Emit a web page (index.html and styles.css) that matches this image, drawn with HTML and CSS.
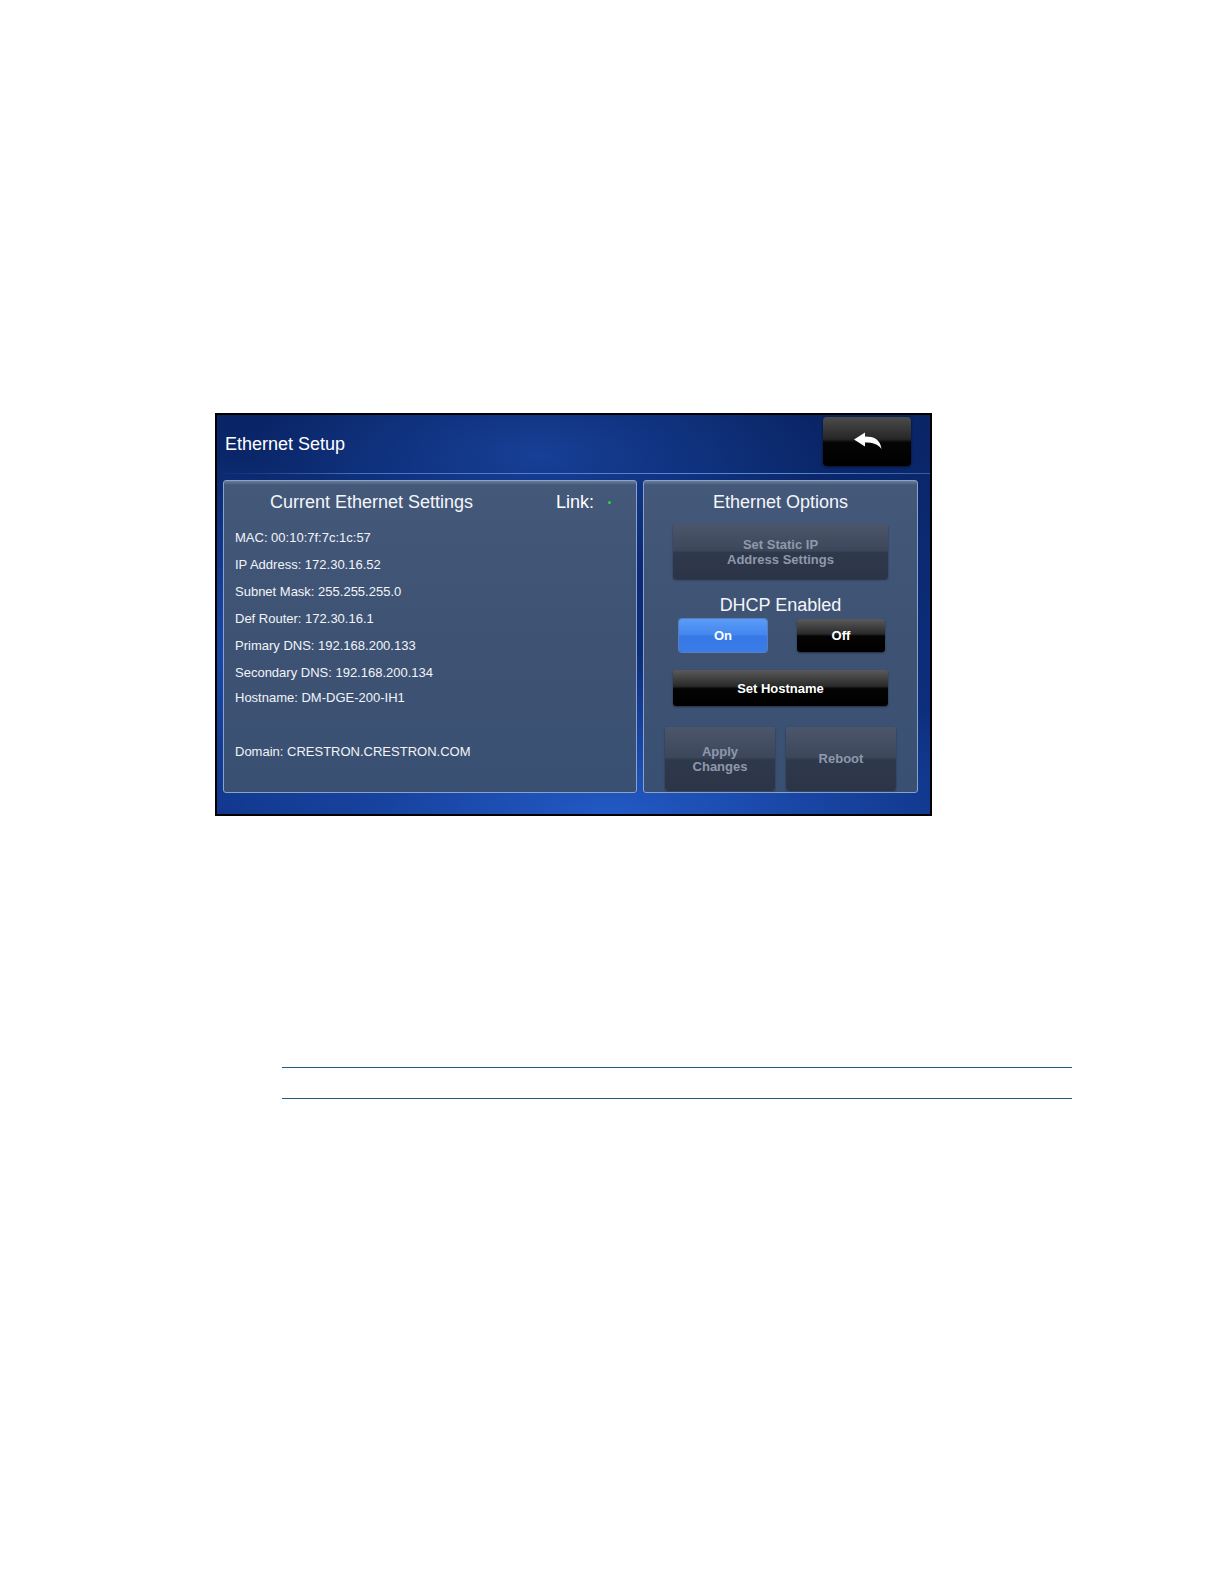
FILE: index.html
```html
<!DOCTYPE html>
<html lang="en">
<head>
    <meta charset="UTF-8">
    <meta name="viewport" content="width=device-width, initial-scale=1.0">
    <title>Ethernet Setup</title>
    <link rel="stylesheet" href="styles.css">
</head>
<body>
    <div class="page">
        <div class="screen">
            <div class="header">
                <div class="header-title">Ethernet Setup</div>
                <button class="back-btn" type="button" aria-label="Back">
                    <svg width="30" height="18" viewBox="0 0 30 18">
                        <path d="M1 7.5 L12 0.5 L12 4.5 C21 4.5 27 7 28.5 17 C25 12 20 10.5 12 10.5 L12 14.5 Z" fill="#ffffff"/>
                    </svg>
                </button>
            </div>
            <div class="divider"></div>
            <div class="panels">
                <div class="panel settings-panel">
                    <div class="settings-head">
                        <span class="panel-title">Current Ethernet Settings</span>
                        <span class="link">Link:<span class="link-dot"></span></span>
                    </div>
                    <ul class="info">
                        <li>MAC: 00:10:7f:7c:1c:57</li>
                        <li>IP Address: 172.30.16.52</li>
                        <li>Subnet Mask: 255.255.255.0</li>
                        <li>Def Router: 172.30.16.1</li>
                        <li>Primary DNS: 192.168.200.133</li>
                        <li>Secondary DNS: 192.168.200.134</li>
                        <li class="host">Hostname: DM-DGE-200-IH1</li>
                        <li class="domain">Domain: CRESTRON.CRESTRON.COM</li>
                    </ul>
                </div>
                <div class="panel options-panel">
                    <div class="panel-title">Ethernet Options</div>
                    <button class="btn btn-off btn-static" type="button">Set Static IP<br>Address Settings</button>
                    <div class="dhcp-title">DHCP Enabled</div>
                    <div class="dhcp-row">
                        <button class="btn btn-blue btn-toggle" type="button">On</button>
                        <button class="btn btn-black btn-toggle" type="button">Off</button>
                    </div>
                    <button class="btn btn-black btn-hostname" type="button">Set Hostname</button>
                    <div class="action-row">
                        <button class="btn btn-off btn-action" type="button">Apply<br>Changes</button>
                        <button class="btn btn-off btn-action" type="button">Reboot</button>
                    </div>
                </div>
            </div>
        </div>
        <div class="rules"></div>
    </div>
</body>
</html>
```

FILE: styles.css
```css
body {
    margin: 0;
    padding: 0;
    background-color: #ffffff;
    font-family: "Liberation Sans", Arial, sans-serif;
}
.page {
    padding-top: 413px;
}
.screen {
    box-sizing: border-box;
    width: 717px;
    height: 403px;
    margin-left: 215px;
    border: 2px solid #000000;
    background:
        radial-gradient(ellipse 60% 40% at 55% 100%, rgba(40, 100, 215, 0.8), rgba(40, 100, 215, 0) 100%),
        radial-gradient(ellipse 40% 30% at 45% 10%, rgba(30, 80, 180, 0.6), rgba(30, 80, 180, 0) 100%),
        radial-gradient(ellipse 30% 50% at 0% 60%, rgba(35, 90, 200, 0.6), rgba(35, 90, 200, 0) 100%),
        linear-gradient(#0a2566, #0c2d7a 60%, #0d2f7e);
    color: #ffffff;
}
.header {
    display: flex;
    justify-content: space-between;
    align-items: flex-start;
    height: 58px;
}
.header-title {
    font-size: 18px;
    line-height: 22px;
    margin: 18px 0 0 8px;
}
.back-btn {
    width: 88px;
    height: 49px;
    margin: 2px 19px 0 0;
    border: none;
    border-radius: 4px;
    background: linear-gradient(#4c4c4c, #262626 45%, #050505 52%, #000000);
    box-shadow: 0 1px 3px rgba(0, 0, 0, 0.6);
    display: flex;
    justify-content: center;
    align-items: center;
    padding: 0 0 2px 2px;
}
.divider {
    height: 1px;
    background: linear-gradient(90deg, rgba(90, 140, 230, 0), rgba(90, 140, 230, 0.7) 20%, rgba(110, 160, 240, 0.8) 80%, rgba(90, 140, 230, 0.5));
}
.panels {
    display: flex;
    gap: 6px;
    margin: 6px 0 0 6px;
}
.panel {
    box-sizing: border-box;
    height: 313px;
    border: 1px solid #8aa3c8;
    border-radius: 3px;
    background: linear-gradient(#6b7d98, #44597a 4px, #3e5374 50%, #3a5072);
}
.settings-panel {
    width: 414px;
}
.options-panel {
    width: 275px;
    display: flex;
    flex-direction: column;
    align-items: center;
}
.settings-head {
    display: flex;
    align-items: center;
    padding: 10px 0 0 46px;
}
.panel-title {
    font-size: 18px;
    line-height: 22px;
    color: #f4f6fa;
}
.options-panel .panel-title {
    margin-top: 10px;
}
.link {
    margin-left: auto;
    margin-right: 25px;
    font-size: 18px;
    line-height: 22px;
    display: flex;
    align-items: center;
}
.link-dot {
    width: 3px;
    height: 3px;
    margin-left: 14px;
    border-radius: 50%;
    background-color: #32d042;
}
.info {
    list-style: none;
    margin: 11px 0 0 0;
    padding: 0 0 0 11px;
    font-size: 13px;
    line-height: 27px;
    color: #f2f4f8;
}
.info .host {
    margin-top: -2px;
}
.info .domain {
    margin-top: 27px;
}
.btn {
    border: none;
    border-radius: 3px;
    font-family: "Liberation Sans", Arial, sans-serif;
    font-weight: bold;
    font-size: 13px;
    line-height: 15px;
    padding: 0;
    box-shadow: 0 1px 2px rgba(0, 0, 0, 0.45);
}
.btn-off {
    color: #8e99ac;
    background: linear-gradient(#4c566b, #3d475b 48%, #2f394c 52%, #2c3547);
}
.btn-black {
    color: #ffffff;
    background: linear-gradient(#5a5a5a, #2a2a2a 45%, #040404 52%, #000000);
}
.btn-blue {
    color: #ffffff;
    background: linear-gradient(#5b9cf8, #4386ee 48%, #3578e6 52%, #3a7de8);
    box-shadow: 0 0 0 1px rgba(120, 170, 250, 0.5);
}
.btn-static {
    width: 215px;
    height: 55px;
    margin-top: 11px;
}
.dhcp-title {
    margin-top: 15px;
    font-size: 18px;
    line-height: 22px;
    color: #f4f6fa;
}
.dhcp-row {
    display: flex;
    justify-content: space-between;
    width: 206px;
    margin: 3px 0 0 3px;
}
.btn-toggle {
    width: 88px;
    height: 33px;
}
.btn-hostname {
    width: 215px;
    height: 36px;
    margin-top: 18px;
}
.action-row {
    display: flex;
    gap: 11px;
    margin-top: 21px;
}
.btn-action {
    width: 110px;
    height: 63px;
}
.rules {
    box-sizing: border-box;
    width: 790px;
    height: 32px;
    margin: 251px 0 0 282px;
    border-top: 1px solid #1f5a85;
    border-bottom: 1px solid #1f5a85;
}
```
